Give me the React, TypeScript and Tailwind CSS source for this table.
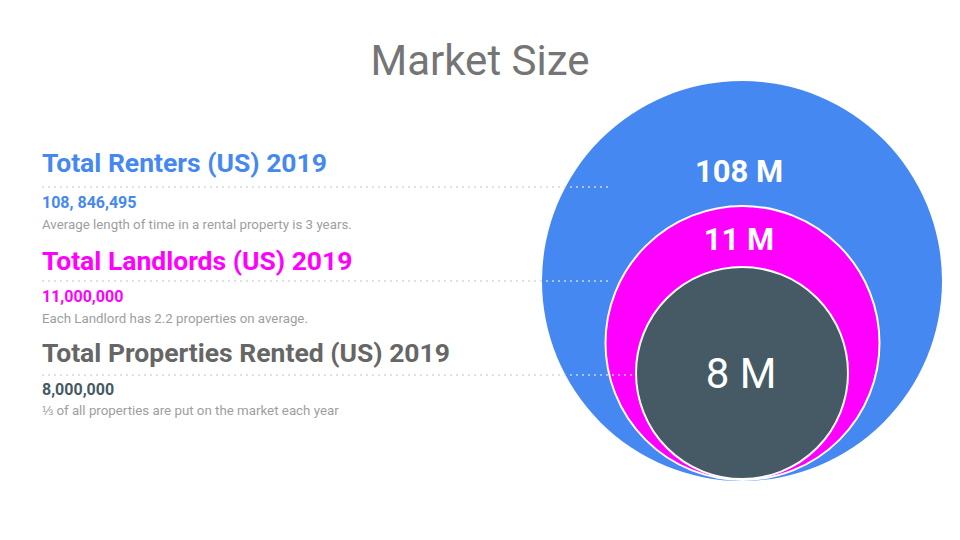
export default function App() {
  const dots = [
    { y: 187, x2: 612 },
    { y: 281, x2: 612 },
    { y: 375, x2: 634 },
  ];

  return (
    <div
      className="relative w-[960px] h-[540px] overflow-hidden bg-white"
      style={{ fontFamily: 'Roboto, "Liberation Sans", sans-serif' }}
    >
      {/* Title */}
      <div className="h-[80px] pt-[40px] text-center">
        <h1 className="text-[42px] leading-[42px] font-normal text-[#757575]">Market Size</h1>
      </div>

      <div className="flex">
        {/* Stats column */}
        <div className="w-[540px] pl-[42px] flex flex-col">
          <h2 className="mt-[68px] text-[26.5px] leading-[30px] font-bold text-[#4688f1]">
            Total Renters (US) 2019
          </h2>
          <p className="mt-[15px] text-[16px] leading-[20px] font-bold text-[#4688f1]">108, 846,495</p>
          <p className="mt-[4px] text-[13.3px] leading-[16px] text-[#9e9e9e]">
            Average length of time in a rental property is 3 years.
          </p>

          <h2 className="mt-[13px] text-[26.5px] leading-[30px] font-bold text-[#ff00ff]">
            Total Landlords (US) 2019
          </h2>
          <p className="mt-[11px] text-[16px] leading-[20px] font-bold text-[#ff00ff]">11,000,000</p>
          <p className="mt-[4px] text-[13.3px] leading-[16px] text-[#9e9e9e]">
            Each Landlord has 2.2 properties on average.
          </p>

          <h2 className="mt-[11px] text-[26.5px] leading-[30px] font-bold text-[#666666]">
            Total Properties Rented (US) 2019
          </h2>
          <p className="mt-[12px] text-[16px] leading-[20px] font-bold text-[#455a64]">8,000,000</p>
          <p className="mt-[3px] text-[13.3px] leading-[16px] text-[#9e9e9e]">
            ⅓ of all properties are put on the market each year
          </p>
        </div>

        {/* Nested circles chart */}
        <svg className="w-[404px] h-[404px] shrink-0" viewBox="540 80 404 404">
          <circle cx={742} cy={281} r={200} fill="#4688f1" />
          <circle cx={742.5} cy={343} r={137} fill="#ff00ff" stroke="#ffffff" strokeWidth={2} />
          <circle cx={742} cy={373} r={106} fill="#455a64" stroke="#ffffff" strokeWidth={2} />
          <text x={739} y={182} textAnchor="middle" fill="#ffffff" fontSize={31} fontWeight={700}>
            108 M
          </text>
          <text x={739} y={250} textAnchor="middle" fill="#ffffff" fontSize={31} fontWeight={700}>
            11 M
          </text>
          <text x={741} y={388} textAnchor="middle" fill="#ffffff" fontSize={42} fontWeight={400}>
            8 M
          </text>
        </svg>
      </div>

      {/* Dotted leader lines drawn over the chart */}
      <svg className="absolute inset-0 w-[960px] h-[540px] pointer-events-none" viewBox="0 0 960 540">
        {dots.map((d) => (
          <line
            key={d.y}
            x1={43}
            y1={d.y}
            x2={d.x2}
            y2={d.y}
            stroke="#d6d6d6"
            strokeWidth={2}
            strokeLinecap="round"
            strokeDasharray="0 6"
          />
        ))}
      </svg>
    </div>
  );
}
